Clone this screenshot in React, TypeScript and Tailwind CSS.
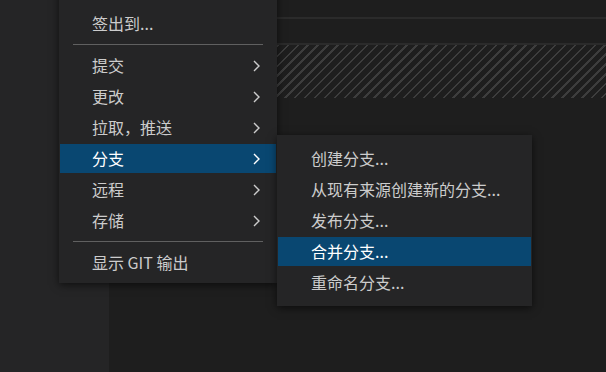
const mainItems: ({ label: string; sub?: boolean; active?: boolean; clip?: boolean } | 'sep')[] = [
  { label: '克隆', clip: true },
  { label: '签出到...' },
  'sep',
  { label: '提交', sub: true },
  { label: '更改', sub: true },
  { label: '拉取，推送', sub: true },
  { label: '分支', sub: true, active: true },
  { label: '远程', sub: true },
  { label: '存储', sub: true },
  'sep',
  { label: '显示 GIT 输出' },
];

const branchItems = [
  { label: '创建分支...' },
  { label: '从现有来源创建新的分支...' },
  { label: '发布分支...' },
  { label: '合并分支...', active: true },
  { label: '重命名分支...' },
];

function Chevron() {
  return (
    <svg width="7" height="12" viewBox="0 0 7 12" className="shrink-0">
      <polyline points="1,1 6,6 1,11" fill="none" stroke="currentColor" strokeWidth="1.4" />
    </svg>
  );
}

function MenuRow({
  label,
  sub,
  active,
  clip,
  padLeft,
}: {
  label: string;
  sub?: boolean;
  active?: boolean;
  clip?: boolean;
  padLeft: string;
}) {
  return (
    <div className="h-[31px] px-[1px] py-[1px]">
      <div
        className={`flex h-[29px] items-center justify-between pr-[16px] ${padLeft} ${
          active ? 'bg-[#094771] text-white' : 'text-[#cccccc]'
        }`}
      >
        <span className={`whitespace-nowrap pb-[2px] ${clip ? '-translate-y-[3px]' : ''}`}>{label}</span>
        {sub && <Chevron />}
      </div>
    </div>
  );
}

export default function App() {
  return (
    <div className="relative flex h-[372px] w-[606px] overflow-hidden bg-[#1e1e1e] font-['Noto_Sans_CJK_SC','Noto_Sans',sans-serif] text-[16px] leading-none">
      {/* sidebar */}
      <div className="h-full w-[109px] shrink-0 bg-[#252526]" />

      {/* editor */}
      <div className="flex h-full flex-1 flex-col bg-[#1e1e1e]">
        <div className="h-[17px] shrink-0" />
        <div className="h-[2px] shrink-0 bg-[#2b2b2b]" />
        <div className="h-[24px] shrink-0" />
        <div className="h-[2px] shrink-0 bg-[#2b2b2b]" />
        <div className="h-[53px] shrink-0 bg-[repeating-linear-gradient(135deg,#3d3d3d_0px,#3d3d3d_1.7px,transparent_1.7px,transparent_7px)]" />
        <div className="flex-1" />
      </div>

      {/* git menu */}
      <div className="absolute left-[59px] top-[-28px] w-[218px] bg-[#252526] pb-[5px] pt-[5px] shadow-[0_2px_8px_rgba(0,0,0,0.6)]">
        {mainItems.map((it, i) =>
          it === 'sep' ? (
            <div key={i} className="h-[11px] px-[14px] pt-[5px]">
              <div className="h-px bg-[#606060]" />
            </div>
          ) : (
            <MenuRow key={i} label={it.label} sub={it.sub} active={it.active} clip={it.clip} padLeft="pl-[32px]" />
          ),
        )}
      </div>

      {/* branch submenu */}
      <div className="absolute left-[277px] top-[135px] w-[255px] bg-[#252526] pb-[8px] pt-[8px] shadow-[0_2px_8px_rgba(0,0,0,0.6)]">
        {branchItems.map((it, i) => (
          <MenuRow key={i} label={it.label} active={it.active} padLeft="pl-[33px]" />
        ))}
      </div>
    </div>
  );
}
